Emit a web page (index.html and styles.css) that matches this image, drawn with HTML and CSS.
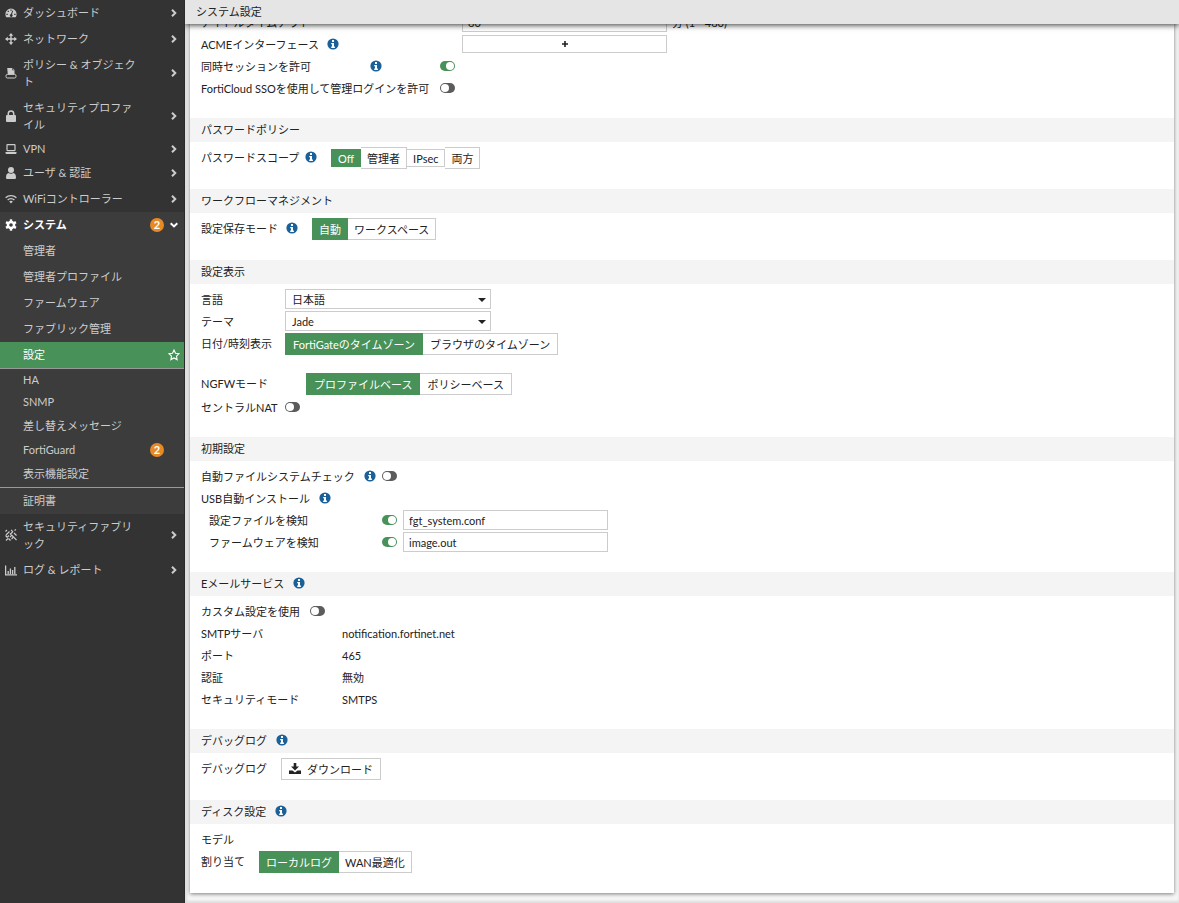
FILE: index.html
```html
<!DOCTYPE html>
<html lang="ja">

<head>
    <meta charset="utf-8">
    <title>システム設定</title>
    <link rel="stylesheet" href="styles.css">
</head>

<body>
    <!-- shared icons -->
    <svg class="sprite" aria-hidden="true">
        <symbol id="i-info" viewBox="0 0 12 12">
            <circle cx="6" cy="6" r="5.6" fill="#1a6199" />
            <path d="M5 2h2v1.9H5zM4.2 5H7v3.6h.9V10H4.2V8.6H5V6.3h-.8z" fill="#fff" />
        </symbol>
        <symbol id="i-right" viewBox="0 0 8 10">
            <path d="M2 1.7 5.3 5 2 8.3" fill="none" stroke="currentColor" stroke-width="2" />
        </symbol>
        <symbol id="i-down" viewBox="0 0 10 10">
            <path d="M1.7 3.2 5 6.4 8.3 3.2" fill="none" stroke="currentColor" stroke-width="2" />
        </symbol>
    </svg>

    <nav class="sidebar">
        <a class="nav-item" href="#">
            <svg class="icon" viewBox="0 0 12 12"><path fill="currentColor" fill-rule="evenodd" d="M.4 7.2a5.6 5.6 0 0 1 11.2 0c0 1.2-.4 2.2-.9 3.1H1.3C.8 9.4.4 8.4.4 7.2zM1.4 6.7h1.4V8H1.4zM2.6 3.8h1.3v1.3H2.6zM5.4 2.5h1.3v1.3H5.4zM9.2 6.7h1.4V8H9.2zM7.4 3.6l.8.4L7 7.300a1.400 1.400 0 1 1-1-.2z" /></svg>
            <span class="nav-text">ダッシュボード</span>
            <svg class="chevron"><use href="#i-right" /></svg>
        </a>
        <a class="nav-item" href="#">
            <svg class="icon" viewBox="0 0 12 12"><path d="M6 1v10M1 6h10" stroke="currentColor" stroke-width="1.4" /><path fill="currentColor" d="M6 0l2.300 2.800H3.700zM6 12l2.300-2.800H3.700zM0 6l2.800-2.300v4.600zM12 6 9.200 3.700v4.600z" /></svg>
            <span class="nav-text">ネットワーク</span>
            <svg class="chevron"><use href="#i-right" /></svg>
        </a>
        <a class="nav-item" href="#">
            <svg class="icon" viewBox="0 0 12 12"><path fill="currentColor" d="M2.200 1h5.300l2 2v4.200H2.800z" /><path d="M7.500 1v2h2" fill="none" stroke="#333" stroke-width=".6" /><rect x="1" y="7.400" width="10" height="3.600" rx="1.400" fill="none" stroke="currentColor" /></svg>
            <span class="nav-text">ポリシー &amp; オブジェクト</span>
            <svg class="chevron"><use href="#i-right" /></svg>
        </a>
        <a class="nav-item" href="#">
            <svg class="icon" viewBox="0 0 12 12"><rect x="1" y="5" width="10" height="7" rx="1" fill="currentColor" /><path d="M3.300 5.500V3.600a2.700 2.700 0 0 1 5.400 0v1.900" fill="none" stroke="currentColor" stroke-width="1.500" /></svg>
            <span class="nav-text">セキュリティプロファイル</span>
            <svg class="chevron"><use href="#i-right" /></svg>
        </a>
        <a class="nav-item latin" href="#">
            <svg class="icon" viewBox="0 0 12 12"><rect x="2" y="1.600" width="8" height="6" rx=".5" fill="none" stroke="currentColor" stroke-width="1.200" /><path fill="currentColor" d="M.5 9h11v1a1 1 0 0 1-1 1h-9a1 1 0 0 1-1-1z" /></svg>
            <span class="nav-text">VPN</span>
            <svg class="chevron"><use href="#i-right" /></svg>
        </a>
        <a class="nav-item" href="#">
            <svg class="icon" viewBox="0 0 12 12"><circle cx="6" cy="3" r="3" fill="currentColor" /><path fill="currentColor" d="M1 10.500C1 8 2 6.300 3.700 6.100c1.400 1 3.200 1 4.600 0C10 6.300 11 8 11 10.500c0 1-.6 1.500-1.500 1.500h-7C1.600 12 1 11.500 1 10.500z" /></svg>
            <span class="nav-text">ユーザ &amp; 認証</span>
            <svg class="chevron"><use href="#i-right" /></svg>
        </a>
        <a class="nav-item" href="#">
            <svg class="icon" viewBox="0 0 12 12"><path d="M.6 4.800a7.700 7.700 0 0 1 10.800 0M2.600 7a4.800 4.800 0 0 1 6.800 0" fill="none" stroke="currentColor" stroke-width="1.300" /><path fill="currentColor" d="M4.200 8.600a2.600 2.600 0 0 1 3.600 0L6 10.600z" /></svg>
            <span class="nav-text">WiFiコントローラー</span>
            <svg class="chevron"><use href="#i-right" /></svg>
        </a>

        <div class="nav-group">
            <a class="nav-item open" href="#">
                <svg class="icon" viewBox="0 0 12 12"><g fill="currentColor"><path d="M4.800.3h2.400v11.400H4.800z" /><path d="M4.800.3h2.400v11.400H4.800z" transform="rotate(60 6 6)" /><path d="M4.800.3h2.400v11.400H4.800z" transform="rotate(120 6 6)" /><circle cx="6" cy="6" r="4.300" /></g><circle cx="6" cy="6" r="1.800" fill="#3c3c3c" /></svg>
                <span class="nav-text">システム</span>
                <span class="badge">2</span>
                <svg class="chevron"><use href="#i-down" /></svg>
            </a>
            <a class="nav-item sub" href="#"><span class="nav-text">管理者</span></a>
            <a class="nav-item sub" href="#"><span class="nav-text">管理者プロファイル</span></a>
            <a class="nav-item sub" href="#"><span class="nav-text">ファームウェア</span></a>
            <a class="nav-item sub" href="#"><span class="nav-text">ファブリック管理</span></a>
            <a class="nav-item sub active" href="#">
                <span class="nav-text">設定</span>
                <svg class="star" viewBox="0 0 12 12"><path d="m6 1 1.500 3.200 3.500.5-2.500 2.400.6 3.500L6 8.900l-3.100 1.700.6-3.500L1 4.700l3.500-.5z" fill="none" stroke="currentColor" stroke-width="1.100" /></svg>
            </a>
            <a class="nav-item sub latin" href="#"><span class="nav-text">HA</span></a>
            <a class="nav-item sub latin" href="#"><span class="nav-text">SNMP</span></a>
            <a class="nav-item sub" href="#"><span class="nav-text">差し替えメッセージ</span></a>
            <a class="nav-item sub latin" href="#">
                <span class="nav-text">FortiGuard</span>
                <span class="badge">2</span>
                <span class="chevron"></span>
            </a>
            <a class="nav-item sub" href="#"><span class="nav-text">表示機能設定</span></a>
            <a class="nav-item sub divided" href="#"><span class="nav-text">証明書</span></a>
        </div>

        <a class="nav-item" href="#">
            <svg class="icon" viewBox="0 0 12 12"><path d="M.5 2.500 2 1M1 6l3.500-3.500M2.500 8 4 6.500M5.500 5 8 2.500M9.500 1.500 11 .5M6 .8l2 2M9 4l2.500 2.500M5 4.500l3 3M9 8.500l2.500 2.500M.5 6.500l2 2M3.500 9.500l2 2M1 11.500 3 9.500M5 8 7 6M6.500 10 9 7.500" fill="none" stroke="currentColor" stroke-width="1.100" /></svg>
            <span class="nav-text">セキュリティファブリック</span>
            <svg class="chevron"><use href="#i-right" /></svg>
        </a>
        <a class="nav-item" href="#">
            <svg class="icon" viewBox="0 0 12 12"><path d="M.6 1.500v9.400H12M3.200 10V7M5.400 10V4.500M7.600 10V6M9.800 10V3" fill="none" stroke="currentColor" stroke-width="1.300" /></svg>
            <span class="nav-text">ログ &amp; レポート</span>
            <svg class="chevron"><use href="#i-right" /></svg>
        </a>
    </nav>

    <main class="main">
        <header class="topbar">システム設定</header>

        <div class="content">
            <form class="card">
                <section class="body admin">
                    <div class="row">
                        <label class="label" for="idle">アイドルタイムアウト</label>
                        <input class="text" type="text" id="idle" value="80">
                        <span class="unit">分 (1 - 480)</span>
                    </div>
                    <div class="row">
                        <span class="label start">ACMEインターフェース <svg class="info"><use href="#i-info" /></svg></span>
                        <button class="add" type="button" aria-label="追加"><svg viewBox="0 0 8 8"><path d="M4 1v6M1 4h6" stroke="#222" stroke-width="1.600" /></svg></button>
                    </div>
                    <div class="row">
                        <label class="label session" for="session">同時セッションを許可 <svg class="info"><use href="#i-info" /></svg></label>
                        <input class="toggle" type="checkbox" id="session" checked>
                    </div>
                    <div class="row">
                        <label class="label sso" for="sso">FortiCloud SSOを使用して管理ログインを許可</label>
                        <input class="toggle" type="checkbox" id="sso">
                    </div>
                </section>

                <h2>パスワードポリシー</h2>
                <section class="body password">
                    <div class="row buttons">
                        <span class="label">パスワードスコープ <svg class="info"><use href="#i-info" /></svg></span>
                        <div class="segment">
                            <button class="low on" type="button">Off</button>
                            <button type="button">管理者</button>
                            <button class="low" type="button">IPsec</button>
                            <button type="button">両方</button>
                        </div>
                    </div>
                </section>

                <h2>ワークフローマネジメント</h2>
                <section class="body workflow">
                    <div class="row buttons">
                        <span class="label">設定保存モード <svg class="info"><use href="#i-info" /></svg></span>
                        <div class="segment">
                            <button class="on" type="button">自動</button>
                            <button type="button">ワークスペース</button>
                        </div>
                    </div>
                </section>

                <h2>設定表示</h2>
                <section class="body display">
                    <div class="row">
                        <label class="label" for="lang">言語</label>
                        <div class="select"><select id="lang"><option>日本語</option></select></div>
                    </div>
                    <div class="row">
                        <label class="label" for="theme">テーマ</label>
                        <div class="select"><select id="theme"><option>Jade</option></select></div>
                    </div>
                    <div class="row buttons">
                        <span class="label">日付/時刻表示</span>
                        <div class="segment wide">
                            <button class="on" type="button">FortiGateのタイムゾーン</button>
                            <button type="button">ブラウザのタイムゾーン</button>
                        </div>
                    </div>
                    <div class="row buttons spaced">
                        <span class="label ngfw">NGFWモード</span>
                        <div class="segment wide">
                            <button class="on" type="button">プロファイルベース</button>
                            <button type="button">ポリシーベース</button>
                        </div>
                    </div>
                    <div class="row">
                        <label class="label" for="nat">セントラルNAT</label>
                        <input class="toggle" type="checkbox" id="nat">
                    </div>
                </section>

                <h2>初期設定</h2>
                <section class="body startup">
                    <div class="row">
                        <label class="label" for="fsck">自動ファイルシステムチェック <svg class="info"><use href="#i-info" /></svg></label>
                        <input class="toggle" type="checkbox" id="fsck">
                    </div>
                    <div class="row">
                        <span class="label usb">USB自動インストール <svg class="info"><use href="#i-info" /></svg></span>
                    </div>
                    <div class="row">
                        <label class="label nested" for="conf">設定ファイルを検知</label>
                        <input class="toggle" type="checkbox" id="conf" checked>
                        <input class="text" type="text" aria-label="設定ファイル" value="fgt_system.conf">
                    </div>
                    <div class="row">
                        <label class="label nested" for="image">ファームウェアを検知</label>
                        <input class="toggle" type="checkbox" id="image" checked>
                        <input class="text" type="text" aria-label="ファームウェア" value="image.out">
                    </div>
                </section>

                <h2>Eメールサービス <svg class="info"><use href="#i-info" /></svg></h2>
                <section class="body email">
                    <div class="row">
                        <label class="label custom" for="custom">カスタム設定を使用</label>
                        <input class="toggle" type="checkbox" id="custom">
                    </div>
                    <div class="row"><span class="label">SMTPサーバ</span><span>notification.fortinet.net</span></div>
                    <div class="row"><span class="label">ポート</span><span>465</span></div>
                    <div class="row"><span class="label">認証</span><span>無効</span></div>
                    <div class="row"><span class="label">セキュリティモード</span><span>SMTPS</span></div>
                </section>

                <h2>デバッグログ <svg class="info"><use href="#i-info" /></svg></h2>
                <section class="body debug">
                    <div class="row buttons">
                        <span class="label">デバッグログ</span>
                        <button class="download" type="button">
                            <svg viewBox="0 0 12 12"><path fill="#222" d="M4.700 0h2.600v3.500H10L6 7.500l-4-4h2.700z" /><path fill="#222" d="M0 7.500h3.500L6 9.600l2.500-2.100H12V11H0z" /></svg>
                            ダウンロード
                        </button>
                    </div>
                </section>

                <h2>ディスク設定 <svg class="info"><use href="#i-info" /></svg></h2>
                <section class="body disk">
                    <div class="row"><span class="label">モデル</span></div>
                    <div class="row buttons">
                        <span class="label">割り当て</span>
                        <div class="segment">
                            <button class="on" type="button">ローカルログ</button>
                            <button type="button">WAN最適化</button>
                        </div>
                    </div>
                </section>
            </form>
        </div>
    </main>
</body>

</html>
```

FILE: styles.css
```css
* {
    box-sizing: border-box;
}

body {
    margin: 0;
    display: flex;
    height: 100vh;
    overflow: hidden;
    font-family: Lato, "Noto Sans CJK JP", sans-serif;
    font-size: 11px;
    line-height: 17px;
    color: #222;
    background: #f7f7f7;
}

button,
input,
select {
    font: inherit;
    color: inherit;
    margin: 0;
}

button {
    cursor: pointer;
}

.sprite {
    display: none;
}

/* Sidebar */
.sidebar {
    flex: 0 0 185px;
    background: #333;
    border-right: 1px solid #2b2b2b;
}

.nav-item {
    display: flex;
    align-items: center;
    padding: 4px 5px 5px;
    color: #ccc;
    text-decoration: none;
}

.nav-item.latin {
    padding: 2px 5px 3px;
}

.icon {
    flex: none;
    width: 12px;
    height: 12px;
    margin-right: 6px;
}

.nav-text {
    width: 116px;
    line-break: normal;
}

.chevron {
    flex: none;
    width: 10px;
    height: 10px;
    margin-left: auto;
}

.badge {
    width: 14px;
    height: 14px;
    margin-left: auto;
    border-radius: 50%;
    background: #e78a24;
    color: #fff;
    font-weight: bold;
    line-height: 14px;
    text-align: center;
}

.badge + .chevron {
    margin-left: 5px;
}

.nav-group {
    background: #3c3c3c;
}

.nav-item.open {
    color: #fff;
    font-weight: bold;
}

.nav-item.sub {
    padding-left: 23px;
}

.nav-item.active {
    background: #489158;
    border-bottom: 1px solid #999;
    color: #fff;
}

.nav-item.divided {
    border-top: 1px solid #999;
}

.star {
    width: 12px;
    height: 12px;
    margin-left: auto;
    margin-right: -1px;
}

/* Main area */
.main {
    flex: 1;
    min-width: 0;
    display: flex;
    flex-direction: column;
    box-shadow: inset 2px 0 3px #ddd, inset 0 -2px 3px #ddd;
}

.topbar {
    position: relative;
    z-index: 1;
    flex: none;
    height: 24px;
    padding: 3px 11px;
    background: #e5e5e5;
    box-shadow: 0 1px 6px rgba(0, 0, 0, 0.8);
    clip-path: inset(0 0 -12px 0);
}

.content {
    flex: 1;
    min-height: 0;
    padding: 0 5px;
}

/* scrolled under the top bar */
.card {
    margin-top: -17px;
    background: #fff;
    box-shadow: 0 1px 4px rgba(0, 0, 0, 0.5);
}

h2 {
    display: flex;
    align-items: center;
    gap: 9px;
    height: 24px;
    margin: 0;
    padding: 0 11px 2px;
    background: #f4f4f4;
    font-size: 11px;
    font-weight: normal;
}

.body {
    padding: 4px 11px 19px;
}

.row {
    display: flex;
    align-items: center;
    height: 22px;
}

.row.buttons {
    height: 24px;
}

.row.spaced {
    margin-top: 16px;
}

.label {
    flex: none;
    display: flex;
    align-items: center;
    justify-content: space-between;
    white-space: nowrap;
}

.buttons .label {
    padding-bottom: 2px;
}

.info {
    flex: none;
    width: 12px;
    height: 12px;
}

.text,
.add {
    width: 205px;
}

.text,
select {
    height: 20px;
    padding: 0 6px;
    border: 1px solid #ccc;
    border-radius: 0;
    background: #fff;
}

.text {
    padding: 0 5px;
}

.unit {
    margin-left: 5px;
}

.add {
    display: flex;
    align-items: center;
    justify-content: center;
    height: 18px;
    padding: 0;
    border: 1px solid #ccc;
    background: #fff;
}

.add svg {
    width: 8px;
    height: 8px;
}

.select {
    position: relative;
    width: 206px;
}

.select::after {
    content: "";
    position: absolute;
    right: 5px;
    top: 9px;
    border: 4px solid transparent;
    border-top-color: #222;
    border-bottom: 0;
    pointer-events: none;
}

select {
    display: block;
    width: 100%;
    appearance: none;
}

.toggle {
    appearance: none;
    flex: none;
    display: flex;
    width: 15px;
    height: 10px;
    padding: 1px;
    border-radius: 5px;
    background: #5c5c5c;
}

.toggle::before {
    content: "";
    width: 8px;
    height: 8px;
    border-radius: 50%;
    background: #fff;
}

.toggle:checked {
    justify-content: flex-end;
    background: #489158;
}

.segment {
    display: flex;
    align-items: center;
}

.segment button,
.download {
    height: 22px;
    padding: 0 6px;
    border: 1px solid #ccc;
    background: #fff;
    white-space: nowrap;
}

.segment button + button {
    border-left-width: 0;
}

.segment.wide button {
    padding: 0 7px;
}

.segment .low {
    height: 18px;
}

.segment button.on {
    border-color: #489158;
    background: #489158;
    color: #fff;
}

.download {
    display: flex;
    align-items: center;
    gap: 6px;
    padding: 0 7px;
}

.download svg {
    width: 12px;
    height: 12px;
}

/* Label widths per section */
.admin .label {
    width: 261px;
}

.admin .start {
    justify-content: flex-start;
    gap: 8px;
}

.admin .session {
    width: 181px;
    margin-right: 58px;
}

.admin .sso {
    width: 239px;
}

.password .label {
    width: 116px;
    margin-right: 14px;
}

.workflow .label {
    width: 97px;
    margin-right: 14px;
}

.display .label {
    width: 84px;
}

.display .ngfw {
    width: 105px;
}

.startup .label {
    width: 175px;
    margin-right: 6px;
}

.startup .usb {
    width: 130px;
}

.startup .nested {
    padding-left: 8px;
}

.startup .toggle {
    margin-right: 6px;
}

.email .label {
    width: 141px;
}

.email .custom {
    width: 109px;
}

.debug .label {
    width: 80px;
}

.disk .label {
    width: 58px;
}
```
